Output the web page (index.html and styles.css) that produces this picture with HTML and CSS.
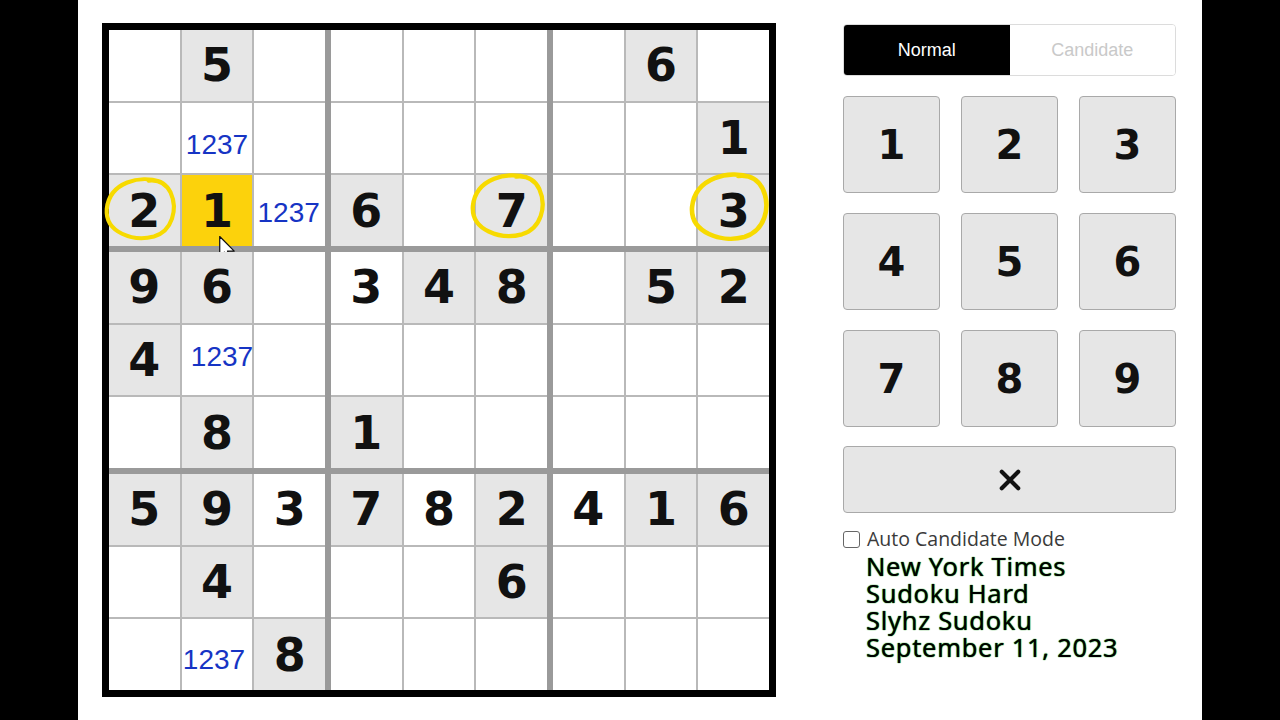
FILE: index.html
```html
<!DOCTYPE html>
<html lang="en">
<head>
<meta charset="utf-8">
<title>Sudoku Hard</title>
<link rel="stylesheet" href="styles.css">
</head>
<body>
<main class="page">
  <section class="board">
    <div class="box">
      <div class="cell"></div><div class="cell given">5</div><div class="cell"></div>
      <div class="cell"></div><div class="cell"><span class="cand c1">1237</span></div><div class="cell"></div>
      <div class="cell given">2<svg class="ring ring-a" viewBox="0 0 80 72" preserveAspectRatio="none"><path d="M60 6 C40 -1 6 6 3 36 C1 62 32 72 54 66 C74 60 80 36 72 18 C66 6 56 4 48 5"/></svg></div>
      <div class="cell sel">1<svg class="pointer" viewBox="0 0 18 27"><path d="M1.5 1.5 L1.5 21 L6 16.5 L9.5 25 L12.5 23.7 L9 15.5 L15.5 15.5 Z"/></svg></div>
      <div class="cell"><span class="cand c2">1237</span></div>
    </div>
    <div class="box">
      <div class="cell"></div><div class="cell"></div><div class="cell"></div>
      <div class="cell"></div><div class="cell"></div><div class="cell"></div>
      <div class="cell given">6</div><div class="cell"></div>
      <div class="cell given">7<svg class="ring ring-b" viewBox="0 0 80 72" preserveAspectRatio="none"><path d="M60 6 C40 -1 6 6 3 36 C1 62 32 72 54 66 C74 60 80 36 72 18 C66 6 56 4 48 5"/></svg></div>
    </div>
    <div class="box">
      <div class="cell"></div><div class="cell given">6</div><div class="cell"></div>
      <div class="cell"></div><div class="cell"></div><div class="cell given">1</div>
      <div class="cell"></div><div class="cell"></div>
      <div class="cell given">3<svg class="ring ring-c" viewBox="0 0 80 72" preserveAspectRatio="none"><path d="M60 6 C40 -1 6 6 3 36 C1 62 32 72 54 66 C74 60 80 36 72 18 C66 6 56 4 48 5"/></svg></div>
    </div>
    <div class="box">
      <div class="cell given">9</div><div class="cell given">6</div><div class="cell"></div>
      <div class="cell given">4</div><div class="cell"><span class="cand c3">1237</span></div><div class="cell"></div>
      <div class="cell"></div><div class="cell given">8</div><div class="cell"></div>
    </div>
    <div class="box">
      <div class="cell">3</div><div class="cell given">4</div><div class="cell given">8</div>
      <div class="cell"></div><div class="cell"></div><div class="cell"></div>
      <div class="cell given">1</div><div class="cell"></div><div class="cell"></div>
    </div>
    <div class="box">
      <div class="cell"></div><div class="cell given">5</div><div class="cell given">2</div>
      <div class="cell"></div><div class="cell"></div><div class="cell"></div>
      <div class="cell"></div><div class="cell"></div><div class="cell"></div>
    </div>
    <div class="box">
      <div class="cell given">5</div><div class="cell given">9</div><div class="cell">3</div>
      <div class="cell"></div><div class="cell given">4</div><div class="cell"></div>
      <div class="cell"></div><div class="cell"><span class="cand c4">1237</span></div><div class="cell given">8</div>
    </div>
    <div class="box">
      <div class="cell given">7</div><div class="cell">8</div><div class="cell given">2</div>
      <div class="cell"></div><div class="cell"></div><div class="cell given">6</div>
      <div class="cell"></div><div class="cell"></div><div class="cell"></div>
    </div>
    <div class="box">
      <div class="cell">4</div><div class="cell given">1</div><div class="cell given">6</div>
      <div class="cell"></div><div class="cell"></div><div class="cell"></div>
      <div class="cell"></div><div class="cell"></div><div class="cell"></div>
    </div>
  </section>

  <aside class="panel">
    <div class="mode">
      <button class="mode-btn active">Normal</button>
      <button class="mode-btn">Candidate</button>
    </div>
    <div class="keys">
      <button class="key">1</button><button class="key">2</button><button class="key">3</button>
      <button class="key">4</button><button class="key">5</button><button class="key">6</button>
      <button class="key">7</button><button class="key">8</button><button class="key">9</button>
    </div>
    <button class="key clear" aria-label="Clear">
      <svg viewBox="0 0 24 24" class="clear-icon"><path d="M3 3 L21 21 M21 3 L3 21"/></svg>
    </button>
    <label class="auto"><input type="checkbox" class="check"> Auto Candidate Mode</label>
    <div class="credits">
      <p>New York Times</p>
      <p>Sudoku Hard</p>
      <p>Slyhz Sudoku</p>
      <p>September 11, 2023</p>
    </div>
  </aside>
</main>
</body>
</html>
```

FILE: styles.css
```css
html, body {
  margin: 0;
  padding: 0;
  background: #000;
}

.page {
  width: 1124px;
  height: 720px;
  margin: 0 auto;
  box-sizing: border-box;
  background: #fff;
  display: flex;
  align-items: flex-start;
  padding: 23px 0 0 24px;
}

/* ---------- board ---------- */
.board {
  width: 674px;
  height: 674px;
  box-sizing: border-box;
  border: 7px solid #000;
  background: #9a9a9a;
  display: grid;
  grid-template-columns: repeat(3, 1fr);
  grid-template-rows: repeat(3, 1fr);
  gap: 6px;
  flex-shrink: 0;
}

.box {
  display: grid;
  grid-template-columns: repeat(3, 1fr);
  grid-template-rows: repeat(3, 1fr);
  gap: 2px;
  background: #b9b9b9;
}

.cell {
  position: relative;
  background: #fff;
  display: flex;
  align-items: center;
  justify-content: center;
  font-family: "DejaVu Sans", sans-serif;
  font-weight: bold;
  font-size: 46px;
  color: #111;
  line-height: 1;
}

.cell.given { background: #e6e6e6; }
.cell.sel { background: #fcd20c; }

.cand {
  font-family: "Liberation Sans", Arial, sans-serif;
  font-weight: normal;
  font-size: 28px;
  color: #1634c4;
}
.cand.c1 { transform: translate(0, 7px); }
.cand.c2 { transform: translate(-1px, 2px); }
.cand.c3 { transform: translate(5px, -3px); }
.cand.c4 { transform: translate(-3px, 5px); }

.ring {
  position: absolute;
  fill: none;
  stroke: #f7da00;
  stroke-width: 4.5;
  stroke-linecap: round;
  pointer-events: none;
  overflow: visible;
}
.ring-a { left: -5px; top: 1px; width: 74px; height: 66px; }
.ring-b { left: -6px; top: -3px; width: 77px; height: 68px; }
.ring-c { left: -9px; top: -4px; width: 82px; height: 72px; }

.pointer {
  position: absolute;
  left: 36px;
  top: 60px;
  width: 19px;
  height: 28px;
  fill: #fff;
  stroke: #111;
  stroke-width: 1.2;
  stroke-linejoin: round;
}

/* ---------- side panel ---------- */
.panel {
  width: 333px;
  margin-left: 67px;
  padding-top: 1px;
  display: flex;
  flex-direction: column;
}

.mode {
  display: flex;
  height: 52px;
  border: 1px solid #dcdcdc;
  border-radius: 4px;
  overflow: hidden;
  box-sizing: border-box;
}

.mode-btn {
  flex: 1;
  border: 0;
  margin: 0;
  background: #fff;
  color: #c9c9c9;
  font-family: "Liberation Sans", Arial, sans-serif;
  font-size: 18px;
  padding: 1px 0 0;
}
.mode-btn.active {
  background: #000;
  color: #fff;
}

.keys {
  margin-top: 20px;
  display: grid;
  grid-template-columns: repeat(3, 97px);
  grid-auto-rows: 97px;
  column-gap: 21px;
  row-gap: 20px;
}

.key {
  margin: 0;
  padding: 0;
  background: #e6e6e6;
  border: 1.5px solid #a9a9a9;
  border-radius: 4px;
  box-sizing: border-box;
  font-family: "DejaVu Sans", sans-serif;
  font-weight: bold;
  font-size: 40px;
  color: #111;
  display: flex;
  align-items: center;
  justify-content: center;
}

.clear {
  margin-top: 19px;
  width: 333px;
  height: 67px;
}

.clear-icon {
  width: 22px;
  height: 22px;
  fill: none;
  stroke: #111;
  stroke-width: 4.5;
  stroke-linecap: round;
}

.auto {
  margin-top: 15px;
  display: flex;
  align-items: center;
  gap: 7px;
  font-family: "Open Sans", sans-serif;
  font-size: 19.5px;
  color: #3a3a3a;
  line-height: 22px;
}

.check {
  appearance: none;
  -webkit-appearance: none;
  margin: 0;
  width: 17px;
  height: 17px;
  border: 1.5px solid #666;
  border-radius: 3px;
  box-sizing: border-box;
  background: #fff;
}

.credits {
  margin-top: 3px;
  margin-left: 23px;
}

.credits p {
  margin: 0;
  font-family: "Noto Sans", sans-serif;
  font-size: 25.5px;
  line-height: 27px;
  letter-spacing: 0.7px;
  color: #000;
  text-shadow: 0 0 1px #1f9a1f, 0 0 1px #1f9a1f;
}
```
